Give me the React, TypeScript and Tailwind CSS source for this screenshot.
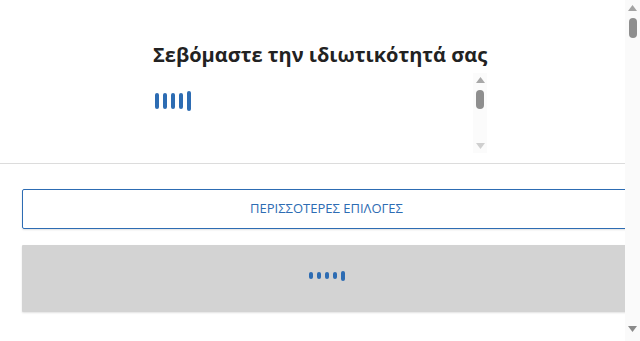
import React from "react";

function Bars({ h, tall, w, gap }: { h: number; tall: number; w: number; gap: number }) {
  const items = [0, 1, 2, 3, 4];
  return (
    <div className="flex items-center" style={{ gap }}>
      {items.map((i) => (
        <div
          key={i}
          className="rounded-[2px] bg-[#2d6cb3]"
          style={{ width: w, height: i === 4 ? tall : h }}
        />
      ))}
    </div>
  );
}

function Arrow({ up, color }: { up: boolean; color: string }) {
  return (
    <svg width="9" height="6" viewBox="0 0 9 6" className="block">
      {up ? (
        <polygon points="4.5,0 9,6 0,6" fill={color} />
      ) : (
        <polygon points="0,0 9,0 4.5,6" fill={color} />
      )}
    </svg>
  );
}

export default function App() {
  return (
    <div
      className="flex h-[341px] w-[640px] overflow-hidden bg-white"
      style={{ fontFamily: '"Open Sans", "Noto Sans", sans-serif' }}
    >
      <div className="flex w-[625px] flex-col overflow-hidden">
        <div className="h-[164px] shrink-0 border-b border-[#dcdcdc] pl-[153px]">
          <div className="flex w-[334px] flex-col">
            <h1 className="mt-[41px] whitespace-nowrap text-[20px] font-bold leading-[28px] text-[#222]">
              Σεβόμαστε την ιδιωτικότητά σας
            </h1>
            <div className="mt-[4px] flex h-[80px] w-[334px]">
              <div className="flex-1 pl-[2px] pt-[18px]">
                <Bars h={16} tall={20} w={4} gap={4} />
              </div>
              <div className="flex w-[14px] flex-col items-center bg-[#fbfbfb]">
                <div className="mt-[4px]">
                  <Arrow up color="#a8a8a8" />
                </div>
                <div className="mt-[7px] h-[19px] w-[8px] rounded-[4px] bg-[#8e8e8e]" />
                <div className="flex-1" />
                <div className="mb-[4px]">
                  <Arrow up={false} color="#cfcfcf" />
                </div>
              </div>
            </div>
          </div>
        </div>
        <div className="ml-[22px] mt-[25px] flex h-[40px] w-[609px] shrink-0 items-center justify-center rounded-[2px] border border-[#2d6cb3] shadow-[0_1px_2px_rgba(0,0,0,0.12)]">
          <span className="text-[13px] text-[#2d6cb3]">ΠΕΡΙΣΣΟΤΕΡΕΣ ΕΠΙΛΟΓΕΣ</span>
        </div>
        <div className="ml-[22px] mt-[16px] flex h-[67px] w-[609px] shrink-0 items-center justify-center rounded-[1px] bg-[#d3d3d3] shadow-[0_1px_2px_rgba(0,0,0,0.12)]">
          <div className="pb-[6px]">
            <Bars h={7} tall={10} w={4} gap={4} />
          </div>
        </div>
      </div>
      <div className="flex w-[15px] flex-col items-center bg-[#fafafa]">
        <div className="mt-[5px]">
          <Arrow up color="#a3a3a3" />
        </div>
        <div className="mt-[7px] h-[20px] w-[8px] rounded-[4px] bg-[#8e8e8e]" />
        <div className="flex-1" />
        <div className="mb-[9px]">
          <Arrow up={false} color="#8a8a8a" />
        </div>
      </div>
    </div>
  );
}
